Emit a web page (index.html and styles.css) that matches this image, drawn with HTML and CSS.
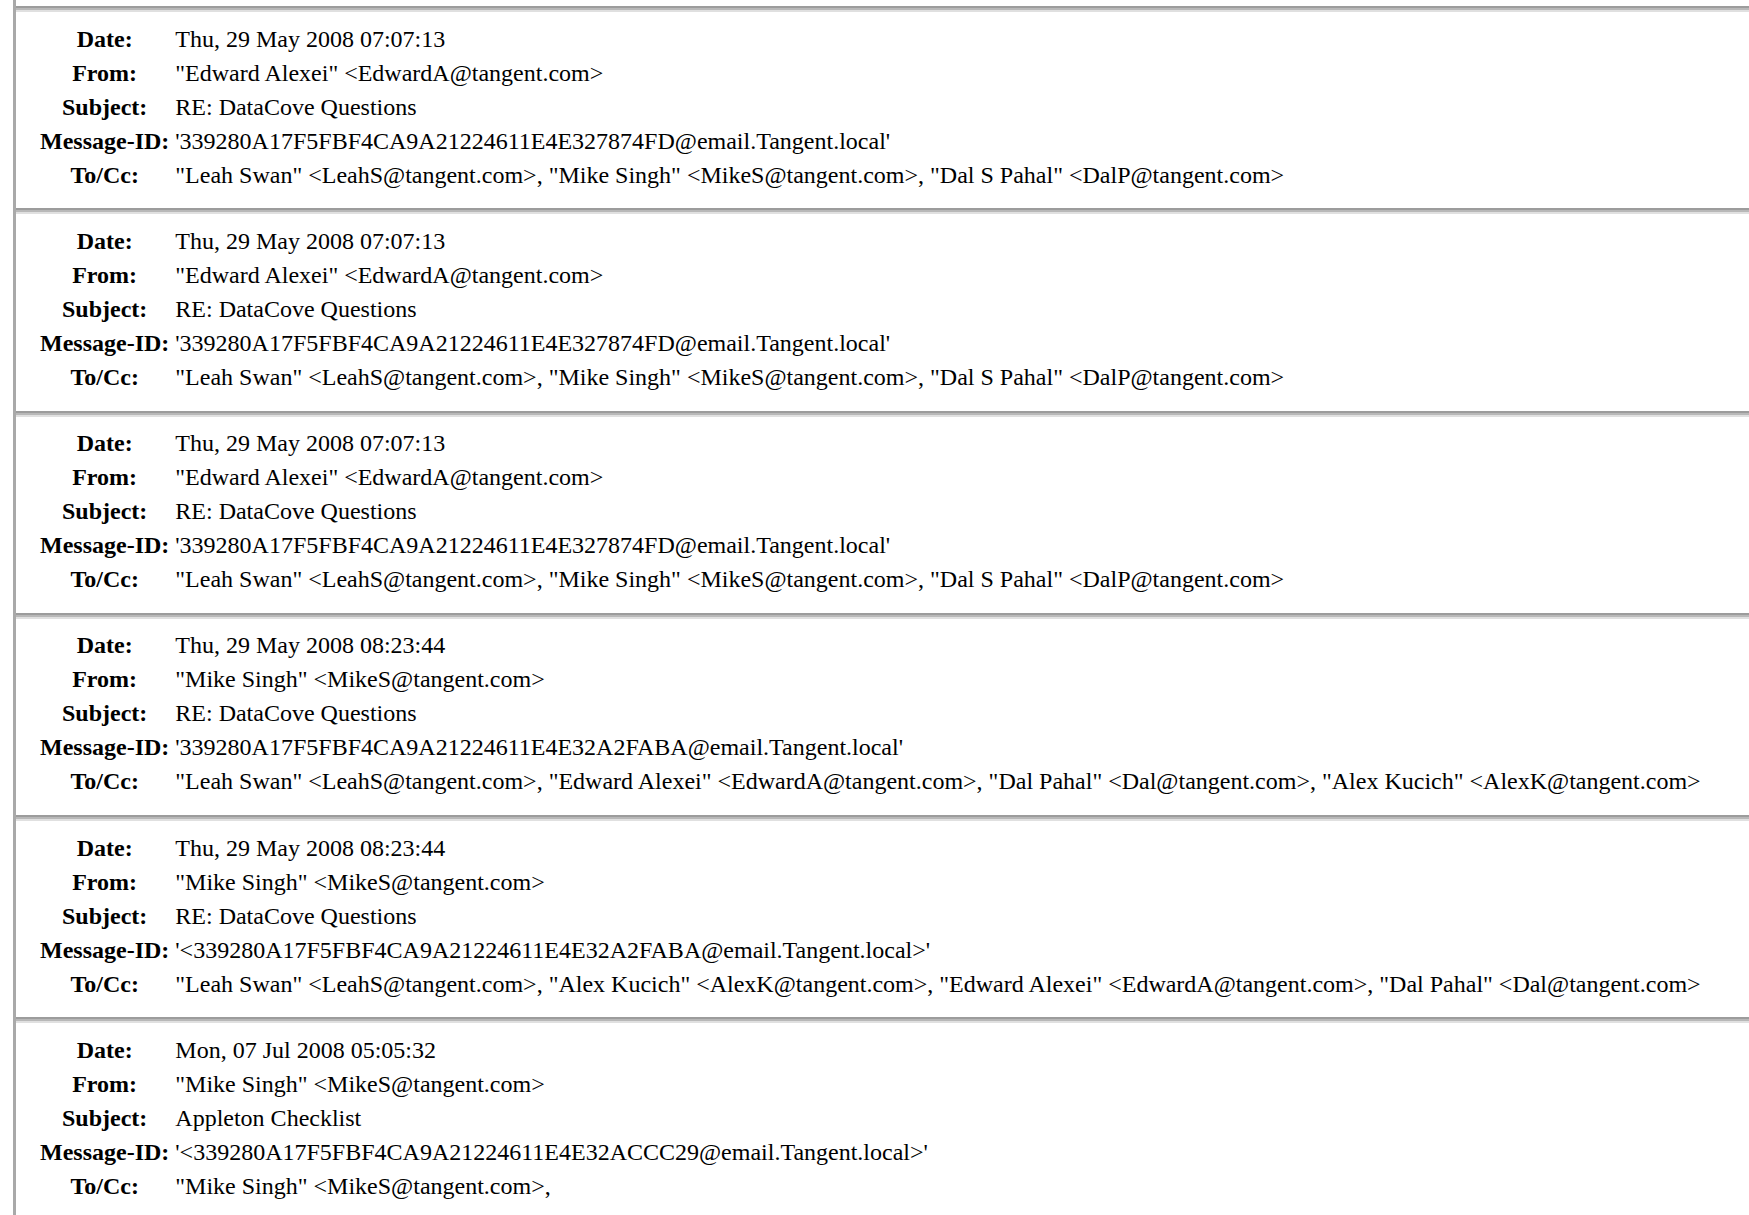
FILE: index.html
```html
<!DOCTYPE html>
<html lang="en">
<head>
   <meta charset="UTF-8">
   <meta name="viewport" content="width=device-width, initial-scale=1.0">
   <title>Message List</title>
   <link rel="stylesheet" href="styles.css">
</head>
<body>
    <div class="list">
        <hr class="sep">
        <div class="msg">
            <table class="msg_table">
                <tr><th>Date:</th><td>Thu, 29 May 2008 07:07:13</td></tr>
                <tr><th>From:</th><td>"Edward Alexei" &lt;EdwardA@tangent.com&gt;</td></tr>
                <tr><th>Subject:</th><td>RE: DataCove Questions</td></tr>
                <tr><th>Message-ID:</th><td>'339280A17F5FBF4CA9A21224611E4E327874FD@email.Tangent.local'</td></tr>
                <tr><th>To/Cc:</th><td>"Leah Swan" &lt;LeahS@tangent.com&gt;, "Mike Singh" &lt;MikeS@tangent.com&gt;, "Dal S Pahal" &lt;DalP@tangent.com&gt;</td></tr>
            </table>
        </div>
        <hr class="sep">
        <div class="msg">
            <table class="msg_table">
                <tr><th>Date:</th><td>Thu, 29 May 2008 07:07:13</td></tr>
                <tr><th>From:</th><td>"Edward Alexei" &lt;EdwardA@tangent.com&gt;</td></tr>
                <tr><th>Subject:</th><td>RE: DataCove Questions</td></tr>
                <tr><th>Message-ID:</th><td>'339280A17F5FBF4CA9A21224611E4E327874FD@email.Tangent.local'</td></tr>
                <tr><th>To/Cc:</th><td>"Leah Swan" &lt;LeahS@tangent.com&gt;, "Mike Singh" &lt;MikeS@tangent.com&gt;, "Dal S Pahal" &lt;DalP@tangent.com&gt;</td></tr>
            </table>
        </div>
        <hr class="sep">
        <div class="msg">
            <table class="msg_table">
                <tr><th>Date:</th><td>Thu, 29 May 2008 07:07:13</td></tr>
                <tr><th>From:</th><td>"Edward Alexei" &lt;EdwardA@tangent.com&gt;</td></tr>
                <tr><th>Subject:</th><td>RE: DataCove Questions</td></tr>
                <tr><th>Message-ID:</th><td>'339280A17F5FBF4CA9A21224611E4E327874FD@email.Tangent.local'</td></tr>
                <tr><th>To/Cc:</th><td>"Leah Swan" &lt;LeahS@tangent.com&gt;, "Mike Singh" &lt;MikeS@tangent.com&gt;, "Dal S Pahal" &lt;DalP@tangent.com&gt;</td></tr>
            </table>
        </div>
        <hr class="sep">
        <div class="msg">
            <table class="msg_table">
                <tr><th>Date:</th><td>Thu, 29 May 2008 08:23:44</td></tr>
                <tr><th>From:</th><td>"Mike Singh" &lt;MikeS@tangent.com&gt;</td></tr>
                <tr><th>Subject:</th><td>RE: DataCove Questions</td></tr>
                <tr><th>Message-ID:</th><td>'339280A17F5FBF4CA9A21224611E4E32A2FABA@email.Tangent.local'</td></tr>
                <tr><th>To/Cc:</th><td>"Leah Swan" &lt;LeahS@tangent.com&gt;, "Edward Alexei" &lt;EdwardA@tangent.com&gt;, "Dal Pahal" &lt;Dal@tangent.com&gt;, "Alex Kucich" &lt;AlexK@tangent.com&gt;</td></tr>
            </table>
        </div>
        <hr class="sep">
        <div class="msg">
            <table class="msg_table">
                <tr><th>Date:</th><td>Thu, 29 May 2008 08:23:44</td></tr>
                <tr><th>From:</th><td>"Mike Singh" &lt;MikeS@tangent.com&gt;</td></tr>
                <tr><th>Subject:</th><td>RE: DataCove Questions</td></tr>
                <tr><th>Message-ID:</th><td>'&lt;339280A17F5FBF4CA9A21224611E4E32A2FABA@email.Tangent.local&gt;'</td></tr>
                <tr><th>To/Cc:</th><td>"Leah Swan" &lt;LeahS@tangent.com&gt;, "Alex Kucich" &lt;AlexK@tangent.com&gt;, "Edward Alexei" &lt;EdwardA@tangent.com&gt;, "Dal Pahal" &lt;Dal@tangent.com&gt;</td></tr>
            </table>
        </div>
        <hr class="sep">
        <div class="msg">
            <table class="msg_table">
                <tr><th>Date:</th><td>Mon, 07 Jul 2008 05:05:32</td></tr>
                <tr><th>From:</th><td>"Mike Singh" &lt;MikeS@tangent.com&gt;</td></tr>
                <tr><th>Subject:</th><td>Appleton Checklist</td></tr>
                <tr><th>Message-ID:</th><td>'&lt;339280A17F5FBF4CA9A21224611E4E32ACCC29@email.Tangent.local&gt;'</td></tr>
                <tr><th>To/Cc:</th><td>"Mike Singh" &lt;MikeS@tangent.com&gt;,</td></tr>
            </table>
        </div>
    </div>
</body>
</html>
```

FILE: styles.css
```css
body {
    margin: 0;
    font-family: "Liberation Serif", "Times New Roman", serif;
    font-size: 24px;
    color: #000;
    background: #fff;
}
.list {
    margin-left: 13px;
    padding-top: 6px;
    border-left: 3px solid #a9a9a9;
}
.sep {
    margin: 0;
    height: 2px;
    border: 0;
    border-top: 2px solid #9c9c9c;
    border-bottom: 2px solid #e0e0e0;
    background: #b8b8b8;
}
.msg {
    padding: 9.5px 0 16.8px 20px;
}
.msg_table {
    border-collapse: collapse;
    border-spacing: 0;
}
.msg_table th {
    padding: 3px 4px;
    line-height: 28px;
    text-align: center;
    font-weight: bold;
    white-space: nowrap;
}
.msg_table td {
    padding: 3px 4px 3px 2px;
    line-height: 28px;
    text-align: left;
    white-space: nowrap;
}
```
